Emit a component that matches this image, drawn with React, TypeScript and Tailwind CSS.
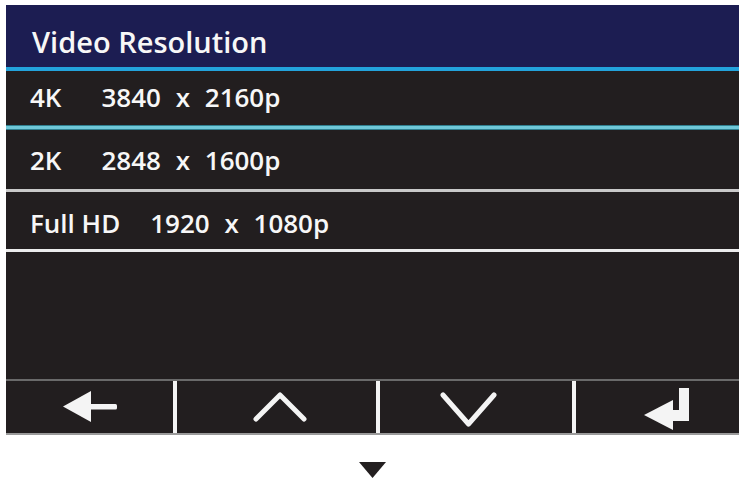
import React from "react";

const font = { fontFamily: '"Open Sans", "Noto Sans", "Liberation Sans", sans-serif' };

function LeftArrow() {
  return (
    <svg width="54" height="32" viewBox="0 0 54 32">
      <polygon points="0,15.5 28,0 28,31" fill="#f4f4f4" />
      <rect x="26" y="13" width="28" height="5.5" rx="1.5" fill="#f4f4f4" />
    </svg>
  );
}

function UpChevron() {
  return (
    <svg width="54" height="30" viewBox="0 0 54 30">
      <polyline points="3,27 27,3 51,27" fill="none" stroke="#f4f4f4" strokeWidth="5" strokeLinecap="round" strokeLinejoin="round" />
    </svg>
  );
}

function DownChevron() {
  return (
    <svg width="57" height="35" viewBox="0 0 57 35">
      <polyline points="3,3 28.5,32 54,3" fill="none" stroke="#f4f4f4" strokeWidth="5" strokeLinecap="round" strokeLinejoin="round" />
    </svg>
  );
}

function EnterIcon() {
  return (
    <svg width="45" height="43" viewBox="0 0 45 43">
      <polygon points="0,27 29,12 29,42" fill="#f4f4f4" />
      <rect x="27" y="22" width="18" height="11" fill="#f4f4f4" />
      <rect x="35" y="0" width="10" height="33" fill="#f4f4f4" />
    </svg>
  );
}

export default function App() {
  return (
    <div className="w-[743px] h-[484px] bg-white pt-[5px] pl-[6px] overflow-hidden" style={font}>
      <div className="w-[733px] flex flex-col bg-[#221e1f] text-[#f7f7f7] font-semibold">
        <div className="h-[62px] bg-[#1c1d52] pl-[26px] pt-[17px] text-[29px] leading-[normal]">
          Video Resolution
        </div>
        <div className="h-[4px] bg-[#23a3dc]" />
        <div className="h-[54px] pl-[24px] pt-[8px] text-[26px] leading-[normal] flex">
          <span className="mr-[40px]">4K</span>
          <span className="[word-spacing:8px]">3840 x 2160p</span>
        </div>
        <div className="h-[5px] bg-[#6fc7d8] border-y border-[#2f7f8f]" />
        <div className="h-[59px] pl-[24px] pt-[12px] text-[26px] leading-[normal] flex">
          <span className="mr-[40px]">2K</span>
          <span className="[word-spacing:8px]">2848 x 1600p</span>
        </div>
        <div className="h-[3px] bg-[#c9c9c9]" />
        <div className="h-[57px] pl-[24px] pt-[13px] text-[26px] leading-[normal] flex">
          <span className="mr-[30px]">Full HD</span>
          <span className="[word-spacing:8px]">1920 x 1080p</span>
        </div>
        <div className="h-[3px] bg-[#ececec]" />
        <div className="h-[127px]" />
        <div className="h-[2px] bg-[#6a6a6a]" />
        <div className="h-[52px] flex">
          <div className="w-[167px] flex items-center justify-center">
            <LeftArrow />
          </div>
          <div className="w-[4px] bg-[#f4f4f4]" />
          <div className="w-[199px] flex items-center justify-center pl-[6px]">
            <UpChevron />
          </div>
          <div className="w-[4px] bg-[#f4f4f4]" />
          <div className="w-[192px] flex items-center justify-center pr-[16px] pt-[4px]">
            <DownChevron />
          </div>
          <div className="w-[4px] bg-[#f4f4f4]" />
          <div className="flex-1 flex items-center justify-center pl-[18px] pt-[4px]">
            <EnterIcon />
          </div>
        </div>
        <div className="h-[2px] bg-[#9a9a9a]" />
      </div>
      <div className="w-[733px] flex justify-center mt-[27px]">
        <svg width="27" height="16" viewBox="0 0 27 16">
          <polygon points="0,0 27,0 13.5,16" fill="#231f20" />
        </svg>
      </div>
    </div>
  );
}
